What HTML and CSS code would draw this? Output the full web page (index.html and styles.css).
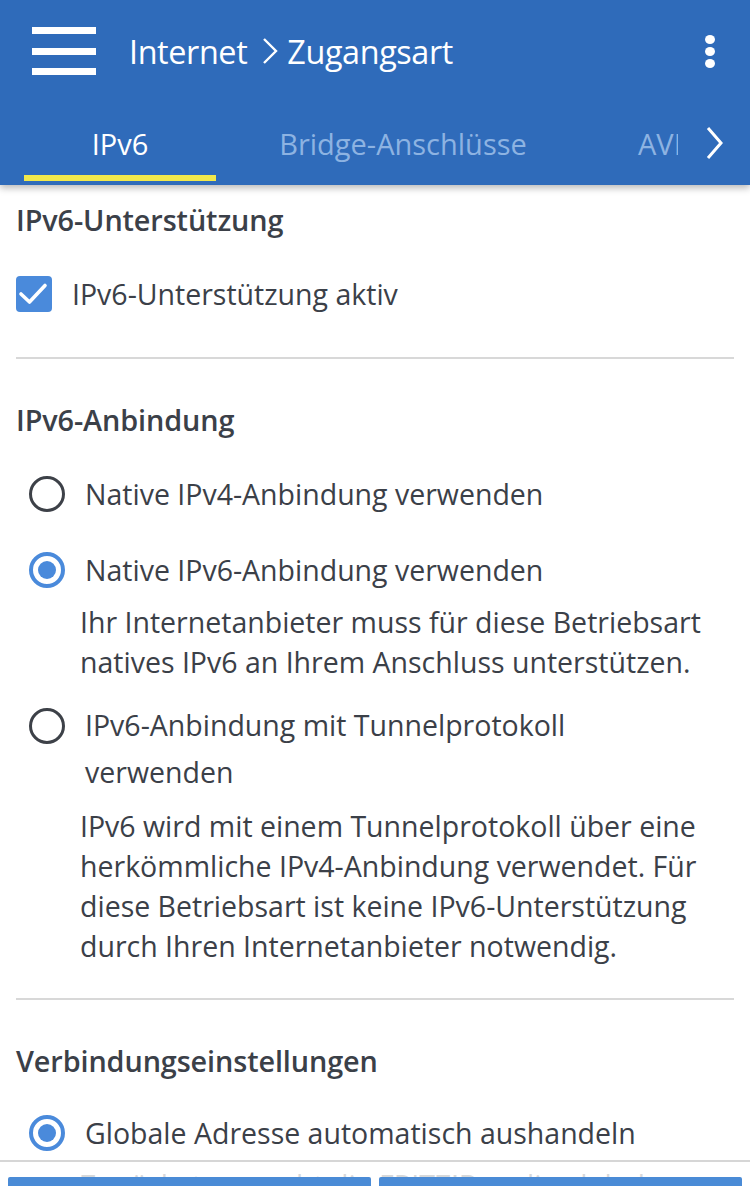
FILE: index.html
```html
<!DOCTYPE html>
<html lang="de">
<head>
<meta charset="utf-8">
<title>Internet – Zugangsart</title>
<link rel="stylesheet" href="styles.css">
</head>
<body>
<header class="appbar">
  <div class="topbar">
    <button class="menu" aria-label="Menü"><span></span><span></span><span></span></button>
    <h1 class="title">Internet<svg class="crumb" viewBox="0 0 16 28" width="16" height="28"><polyline points="2,2 14,14 2,26" fill="none" stroke="#fff" stroke-width="2.4"/></svg>Zugangsart</h1>
    <div class="kebab"><span></span><span></span><span></span></div>
  </div>
  <nav class="tabs">
    <div class="tab-scroll">
      <a class="tab tab-first active">IPv6</a>
      <a class="tab tab-second">Bridge-Anschlüsse</a>
      <a class="tab tab-third">AVM-Dienste</a>
    </div>
    <div class="tab-next"><svg viewBox="0 0 18 34" width="18" height="34"><polyline points="2,2 15,17 2,32" fill="none" stroke="#fff" stroke-width="3"/></svg></div>
  </nav>
</header>

<main class="content">
  <h2 class="group-title first">IPv6-Unterstützung</h2>
  <label class="check-row">
    <span class="checkbox"><svg viewBox="0 0 36 36" width="36" height="36"><polyline points="5,18 13.5,26 29,9.5" fill="none" stroke="#fff" stroke-width="3.6" stroke-linecap="round" stroke-linejoin="round"/></svg></span>
    <span class="check-label">IPv6-Unterstützung aktiv</span>
  </label>

  <hr class="divider">

  <h2 class="group-title">IPv6-Anbindung</h2>
  <div class="option opt-1"><span class="radio"></span><span class="opt-label">Native IPv4-Anbindung verwenden</span></div>
  <div class="option opt-2"><span class="radio on"></span><span class="opt-label">Native IPv6-Anbindung verwenden</span></div>
  <p class="desc desc-1">Ihr Internetanbieter muss für diese Betriebsart<br>natives IPv6 an Ihrem Anschluss unterstützen.</p>
  <div class="option opt-3 tall"><span class="radio"></span><span class="opt-label">IPv6-Anbindung mit Tunnelprotokoll<br>verwenden</span></div>
  <p class="desc desc-2">IPv6 wird mit einem Tunnelprotokoll über eine<br>herkömmliche IPv4-Anbindung verwendet. Für<br>diese Betriebsart ist keine IPv6-Unterstützung<br>durch Ihren Internetanbieter notwendig.</p>

  <hr class="divider divider-2">

  <h2 class="group-title">Verbindungseinstellungen</h2>
  <div class="option opt-4"><span class="radio on"></span><span class="opt-label">Globale Adresse automatisch aushandeln</span></div>
  <p class="desc desc-3">Zunächst versucht die FRITZ!Box die globale<br>Adresse über DHCPv6 zu beziehen.</p>
</main>

<footer class="actions">
  <button class="btn">Übernehmen</button>
  <button class="btn">Abbrechen</button>
</footer>
</body>
</html>
```

FILE: styles.css
```css
* { box-sizing: border-box; }

html, body {
  margin: 0;
  padding: 0;
  background: #ffffff;
}

body {
  font-family: "Open Sans", "Noto Sans", "DejaVu Sans", sans-serif;
  color: #3b4048;
  width: 750px;
  height: 1186px;
  overflow: hidden;
}

/* ---------- App bar ---------- */
.appbar {
  background: #2f6bba;
  height: 185px;
  box-shadow: 0 3px 7px rgba(0, 0, 0, 0.28);
  position: relative;
  z-index: 2;
}

.topbar {
  height: 100px;
  display: flex;
  align-items: center;
  padding: 2px 0 0 32px;
}

.menu {
  width: 64px;
  height: 48px;
  padding: 0;
  border: 0;
  background: none;
  display: flex;
  flex-direction: column;
  justify-content: space-between;
}

.menu span {
  display: block;
  height: 7px;
  width: 64px;
  background: #ffffff;
}

.title {
  margin: 0 0 0 33px;
  font-size: 32.4px;
  font-weight: 400;
  color: #ffffff;
  display: flex;
  align-items: center;
  flex: 1;
  letter-spacing: -0.4px;
}

.crumb {
  margin: 0 9px 0 15px;
}

.kebab {
  width: 10px;
  margin-right: 35px;
  display: flex;
  flex-direction: column;
  gap: 3px;
}

.kebab span {
  width: 10px;
  height: 9px;
  border-radius: 50%;
  background: #ffffff;
}

.tabs {
  height: 85px;
  display: flex;
}

.tab-scroll {
  flex: 1;
  display: flex;
  overflow: hidden;
  padding-left: 24px;
}

.tab {
  height: 85px;
  display: flex;
  align-items: center;
  justify-content: center;
  font-size: 29px;
  color: #8db3e2;
  white-space: nowrap;
  flex: none;
  position: relative;
  padding-top: 1px;
}

.tab.active { color: #ffffff; }

.tab.active::after {
  content: "";
  position: absolute;
  left: 0;
  right: 0;
  bottom: 4px;
  height: 6px;
  background: #f2e84b;
}

.tab-first { width: 192px; }
.tab-second { width: 374px; }
.tab-third { justify-content: flex-start; padding-left: 48px; }

.tab-next {
  width: 72px;
  display: flex;
  align-items: center;
  justify-content: center;
  padding-left: 2px;
}

/* ---------- Content ---------- */
.content {
  padding: 0 16px;
}

.group-title {
  margin: 41px 0 0;
  font-size: 28.8px;
  line-height: 40px;
  font-weight: 600;
  color: #3b4048;
  letter-spacing: -0.1px;
}

.group-title.first { margin-top: 15px; }

.check-row {
  margin-top: 34px;
  height: 40px;
  display: flex;
  align-items: center;
}

.checkbox {
  width: 36px;
  height: 36px;
  border-radius: 4px;
  background: #4a8adb;
  display: block;
}

.checkbox svg { display: block; }

.check-label {
  margin-left: 20px;
  font-size: 28.5px;
  line-height: 40px;
}

.divider {
  margin: 43px 0 0;
  border: 0;
  height: 2px;
  background: #d8d8d8;
}

.divider-2 { margin-top: 32px; }

.option {
  display: flex;
  align-items: center;
  min-height: 40px;
  margin-top: 34px;
}

.opt-2 { margin-top: 36px; }
.opt-3 { margin-top: 20px; }
.opt-4 { margin-top: 32px; }

.option.tall { align-items: flex-start; }
.option.tall .opt-label { line-height: 47px; }
.option.tall .radio { margin-top: 5.5px; }

.radio {
  flex: none;
  width: 36px;
  height: 36px;
  margin-left: 13px;
  border-radius: 50%;
  border: 3px solid #3d4148;
  display: flex;
  align-items: center;
  justify-content: center;
}

.radio.on {
  border: 4px solid #4a8adb;
}

.radio.on::before {
  content: "";
  width: 18px;
  height: 18px;
  border-radius: 50%;
  background: #4a8adb;
}

.opt-label {
  margin-left: 20px;
  font-size: 28.5px;
  line-height: 40px;
}

.desc {
  margin: 12px 0 0;
  padding-left: 64px;
  font-size: 28.5px;
  line-height: 40px;
  white-space: nowrap;
}

.desc-2 { margin-top: 10px; }

/* ---------- Footer actions ---------- */
.actions {
  position: fixed;
  left: 0;
  right: 0;
  bottom: 0;
  height: 26px;
  overflow: hidden;
  background: rgba(255, 255, 255, 0.8);
  border-top: 2px solid #d6d6d6;
  padding: 15px 8px 0;
  display: flex;
  gap: 8px;
  align-items: flex-start;
}

.btn {
  flex: 1;
  height: 60px;
  border: 0;
  border-radius: 2px;
  background: #4a8bd6;
  color: #ffffff;
  font-family: inherit;
  font-size: 27px;
}
```
